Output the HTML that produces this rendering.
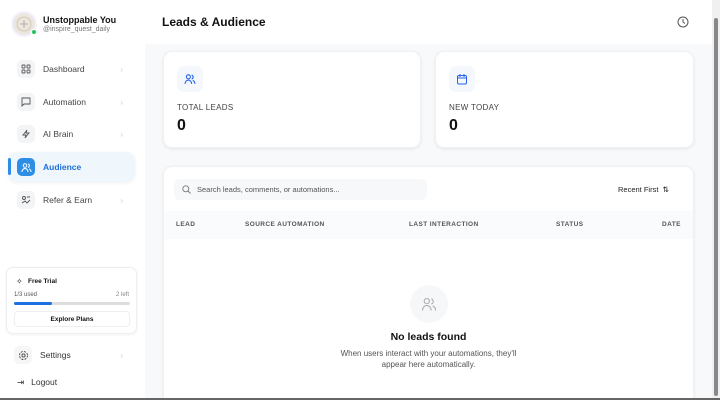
<!DOCTYPE html>
<html><head><style>
*{box-sizing:border-box;margin:0;padding:0}
html,body{width:720px;height:400px;overflow:hidden}
body{font-family:"Liberation Sans",sans-serif;background:#f7f9fb;position:relative;color:#111}
.sb{position:absolute;left:0;top:0;width:145px;height:400px;background:#fff}
.main{position:absolute;left:145px;top:0;width:567px;height:400px;overflow:hidden}
.hdr{position:absolute;left:0;top:0;width:567px;height:44px;background:#fff}
.av{position:absolute;left:11px;top:11px;width:26px;height:26px;border-radius:50%;background:#ece7de;border:2px solid #f3f0ff}
.dot{position:absolute;left:31px;top:29px;width:6px;height:6px;border-radius:50%;background:#22c55e;border:1px solid #fff}
.nm{position:absolute;left:43px;top:15px;font-size:9px;font-weight:bold}
.hd{position:absolute;left:43px;top:26px;font-size:7px;color:#777}
.nav{position:absolute;left:8px;width:127px;height:30px;font-size:8.5px;color:#444;display:flex;align-items:center}
.nav .ic{width:18px;height:18px;border-radius:5px;background:#f3f4f6;margin-left:9px;margin-right:8px;display:flex;align-items:center;justify-content:center}
.nav .ch{position:absolute;right:12px;color:#ccc;font-size:8px}
.act{background:#f0f7fc;border-radius:8px;color:#1d6fd8;font-weight:bold;box-shadow:0 1px 3px rgba(0,0,0,.06)}
.act .ic{background:#2e8ee6}
.bar{position:absolute;left:8px;top:158px;width:3px;height:17px;background:#2e8ee6;border-radius:2px}
.trial{position:absolute;left:6px;top:267px;width:131px;height:67px;border:1px solid #eceef1;border-radius:7px;background:#fff;box-shadow:0 1px 3px rgba(0,0,0,.05)}
.card{position:absolute;background:#fff;border-radius:9px;box-shadow:0 1px 3px rgba(0,0,0,.08);border:1px solid #f0f1f3}
.lbl{position:absolute;left:13px;font-size:8px;color:#444;letter-spacing:.3px}
.val{position:absolute;left:13px;font-size:16px;font-weight:bold}
.sic{position:absolute;left:13px;top:14px;width:26px;height:26px;border-radius:7px;background:#f4f7fb;display:flex;align-items:center;justify-content:center}
.th{position:absolute;top:221px;font-size:6.5px;font-weight:bold;color:#555;letter-spacing:.4px}
</style></head><body>
<div class="sb">
<div class="av"><svg width="22" height="22" viewBox="0 0 22 22"><circle cx="11" cy="11" r="7" fill="none" stroke="#c9bfa9" stroke-width=".8"/><path d="M11 7v8M7 11h8" stroke="#a99" stroke-width=".8"/></svg></div><div class="dot"></div>
<div class="nm">Unstoppable You</div><div class="hd">@inspire_quest_daily</div>
<div class="nav" style="top:54px"><div class="ic"><svg width="10" height="10" viewBox="0 0 10 10" fill="none" stroke="#555" stroke-width=".9"><rect x="1" y="1" width="3" height="3" rx=".6"/><rect x="6" y="1" width="3" height="3" rx=".6"/><rect x="1" y="6" width="3" height="3" rx=".6"/><rect x="6" y="6" width="3" height="3" rx=".6"/></svg></div>Dashboard<span class="ch">›</span></div>
<div class="nav" style="top:87px"><div class="ic"><svg width="10" height="10" viewBox="0 0 10 10" fill="none" stroke="#555" stroke-width=".9"><path d="M1 1h8v6H3L1 9z"/></svg></div>Automation<span class="ch">›</span></div>
<div class="nav" style="top:119px"><div class="ic"><svg width="10" height="10" viewBox="0 0 10 10" fill="none" stroke="#555" stroke-width=".9"><path d="M6 1L2 6h3l-1 3 4-5H5z"/></svg></div>AI Brain<span class="ch">›</span></div>
<div class="nav act" style="top:152px"><div class="ic"><svg width="11" height="11" viewBox="0 0 11 11" fill="none" stroke="#fff" stroke-width="1"><circle cx="4" cy="3.5" r="1.8"/><path d="M1 10c0-2 1.3-3.5 3-3.5S7 8 7 10M7 2a1.8 1.8 0 010 3.5M8 6.8c1.3.5 2 1.7 2 3.2"/></svg></div>Audience</div>
<div class="bar"></div>
<div class="nav" style="top:185px"><div class="ic"><svg width="10" height="10" viewBox="0 0 10 10" fill="none" stroke="#555" stroke-width=".9"><circle cx="3" cy="3" r="1.5"/><path d="M1 8l3-2 2 2 3-3M6 2h3"/></svg></div>Refer &amp; Earn<span class="ch">›</span></div>
<div class="trial">
<div style="position:absolute;left:9px;top:9px;font-size:8px">✧</div>
<div style="position:absolute;left:21px;top:10px;font-size:6.5px;font-weight:bold">Free Trial</div>
<div style="position:absolute;left:7px;top:24px;font-size:6px;color:#555">1/3 used</div>
<div style="position:absolute;right:7px;top:24px;font-size:6px;color:#888">2 left</div>
<div style="position:absolute;left:7px;top:34px;width:116px;height:3px;background:#ddd;border-radius:2px"><div style="width:38px;height:3px;background:#1e6fe0;border-radius:2px"></div></div>
<div style="position:absolute;left:7px;top:43px;width:116px;height:16px;border:1px solid #eee;border-radius:4px;font-size:6.5px;font-weight:bold;text-align:center;line-height:15px">Explore Plans</div>
</div>
<div class="nav" style="top:340px;color:#333;font-size:8.5px"><div class="ic" style="margin-left:6px;margin-right:8px;background:#f6f6f7"><svg width="11" height="11" viewBox="0 0 11 11" fill="none" stroke="#444" stroke-width=".9"><circle cx="5.5" cy="5.5" r="1.6"/><circle cx="5.5" cy="5.5" r="4" stroke-dasharray="2 1.2"/></svg></div>Settings<span class="ch">›</span></div>
<div style="position:absolute;left:17px;top:377px;font-size:8.5px;color:#333"><span style="margin-right:7px">⇥</span>Logout</div>
</div>
<div class="main">
<div class="hdr"><div style="position:absolute;left:17px;top:15px;font-size:12px;font-weight:bold">Leads &amp; Audience</div>
<svg style="position:absolute;left:532px;top:16px" width="12" height="12" viewBox="0 0 12 12" fill="none" stroke="#555" stroke-width="1"><circle cx="6" cy="6" r="5"/><path d="M6 3v3l2 1.5"/></svg></div>
<div class="card" style="left:18px;top:51px;width:258px;height:97px"><div class="sic"><svg width="12" height="12" viewBox="0 0 11 11" fill="none" stroke="#2563eb" stroke-width="1"><circle cx="4" cy="3.5" r="1.8"/><path d="M1 10c0-2 1.3-3.5 3-3.5S7 8 7 10M7 2a1.8 1.8 0 010 3.5M8 6.8c1.3.5 2 1.7 2 3.2"/></svg></div><div class="lbl" style="top:51px">TOTAL LEADS</div><div class="val" style="top:65px">0</div></div>
<div class="card" style="left:290px;top:51px;width:259px;height:97px"><div class="sic"><svg width="12" height="12" viewBox="0 0 12 12" fill="none" stroke="#2563eb" stroke-width="1"><rect x="1.5" y="2.5" width="9" height="8.5" rx="1.5"/><path d="M1.5 5h9M4 1v3M8 1v3"/></svg></div><div class="lbl" style="top:51px">NEW TODAY</div><div class="val" style="top:65px">0</div></div>
<div class="card" style="left:18px;top:166px;width:531px;height:250px">
<div style="position:absolute;left:10px;top:12px;width:253px;height:21px;background:#f6f8fa;border-radius:6px"><svg style="position:absolute;left:8px;top:6px" width="9" height="9" viewBox="0 0 9 9" fill="none" stroke="#777" stroke-width=".9"><circle cx="3.8" cy="3.8" r="3"/><path d="M6 6l2.5 2.5"/></svg><span style="position:absolute;left:23px;top:6px;font-size:7.5px;color:#555">Search leads, comments, or automations...</span></div>
<div style="position:absolute;left:454px;top:18px;font-size:7.5px;color:#222">Recent First &nbsp;⇅</div>
<div style="position:absolute;left:0;top:44px;width:529px;height:28px;background:#fafbfc"></div>
<div style="position:absolute;left:246px;top:118px;width:38px;height:38px;border-radius:50%;background:#f6f7f9;display:flex;align-items:center;justify-content:center"><svg width="16" height="16" viewBox="0 0 11 11" fill="none" stroke="#aaa" stroke-width=".7"><circle cx="4" cy="3.5" r="1.8"/><path d="M1 10c0-2 1.3-3.5 3-3.5S7 8 7 10M7 2a1.8 1.8 0 010 3.5M8 6.8c1.3.5 2 1.7 2 3.2"/></svg></div>
<div style="position:absolute;left:0;width:529px;top:164px;text-align:center;font-size:10.5px;font-weight:bold">No leads found</div>
<div style="position:absolute;left:0;width:529px;top:181px;text-align:center;font-size:8px;color:#555;line-height:11px">When users interact with your automations, they'll<br>appear here automatically.</div>
</div>
</div>
<div class="th" style="left:176px">LEAD</div><div class="th" style="left:245px">SOURCE AUTOMATION</div><div class="th" style="left:409px">LAST INTERACTION</div><div class="th" style="left:556px">STATUS</div><div class="th" style="left:662px">DATE</div>
<div style="position:absolute;left:712px;top:0;width:8px;height:400px;background:#f0f0f0"><div style="position:absolute;left:2px;top:18px;width:4px;height:378px;background:#888;border-radius:2px"></div></div>
<div style="position:absolute;left:0;top:398px;width:720px;height:2px;background:#666"></div>
</body></html>
